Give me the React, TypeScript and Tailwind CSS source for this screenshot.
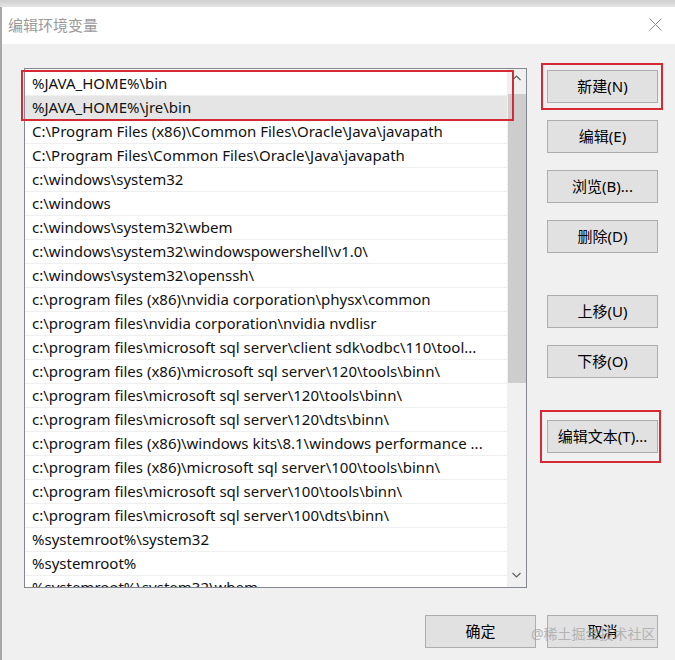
import React from 'react'

const rows = [
  '%JAVA_HOME%\\bin',
  '%JAVA_HOME%\\jre\\bin',
  'C:\\Program Files (x86)\\Common Files\\Oracle\\Java\\javapath',
  'C:\\Program Files\\Common Files\\Oracle\\Java\\javapath',
  'c:\\windows\\system32',
  'c:\\windows',
  'c:\\windows\\system32\\wbem',
  'c:\\windows\\system32\\windowspowershell\\v1.0\\',
  'c:\\windows\\system32\\openssh\\',
  'c:\\program files (x86)\\nvidia corporation\\physx\\common',
  'c:\\program files\\nvidia corporation\\nvidia nvdlisr',
  'c:\\program files\\microsoft sql server\\client sdk\\odbc\\110\\tool...',
  'c:\\program files (x86)\\microsoft sql server\\120\\tools\\binn\\',
  'c:\\program files\\microsoft sql server\\120\\tools\\binn\\',
  'c:\\program files\\microsoft sql server\\120\\dts\\binn\\',
  'c:\\program files (x86)\\windows kits\\8.1\\windows performance ...',
  'c:\\program files (x86)\\microsoft sql server\\100\\tools\\binn\\',
  'c:\\program files\\microsoft sql server\\100\\tools\\binn\\',
  'c:\\program files\\microsoft sql server\\100\\dts\\binn\\',
  '%systemroot%\\system32',
  '%systemroot%',
  '%systemroot%\\system32\\wbem',
]

const font = { fontFamily: '"Noto Sans", "Noto Sans CJK SC", sans-serif' }

function Btn({ label, className = '' }: { label: string; className?: string }) {
  return (
    <div
      className={`flex h-[33px] w-[111px] items-center justify-center border border-[#adadad] bg-[#e1e1e1] text-[15px] text-black ${className}`}
    >
      {label}
    </div>
  )
}

export default function App() {
  return (
    <div className="relative h-[660px] w-[675px] overflow-hidden bg-[#f0f0f0]" style={font}>
      <div className="h-[7px] bg-gradient-to-b from-[#cfcfcf] to-[#e4e4e4]" />
      <div className="flex h-[37px] items-center justify-between border-l-2 border-[#a8a8a8] bg-white pl-[6px] pr-[13px]">
        <span className="text-[15px] text-[#9a9a9a]">编辑环境变量</span>
        <svg width="13" height="13" viewBox="0 0 13 13" className="mb-[2px]">
          <path d="M0.5 0.5 L12.5 12.5 M12.5 0.5 L0.5 12.5" stroke="#8a8a8a" strokeWidth="1" fill="none" />
        </svg>
      </div>

      <div className="flex h-[616px] border-l-2 border-[#a8a8a8]">
        <div className="flex flex-col pl-[22px] pt-[24px]">
          <div className="relative flex h-[520px] w-[503px] border border-[#828790] bg-white">
            <div className="flex-1 overflow-hidden pt-[3px]">
              {rows.map((r, i) => (
                <div
                  key={i}
                  className={`flex h-[24px] items-center whitespace-nowrap border-b border-[#efefef] pl-[7px] text-[15px] text-[#111] ${
                    i === 1 ? 'bg-[#e5e5e5]' : ''
                  }`}
                >
                  {r}
                </div>
              ))}
            </div>
            <div className="flex w-[19px] flex-col items-center bg-[#f0f0f0]">
              <div className="flex h-[17px] items-center justify-center">
                <svg width="9" height="6" viewBox="0 0 9 6">
                  <path d="M0.5 5 L4.5 1 L8.5 5" stroke="#606060" strokeWidth="1.2" fill="none" />
                </svg>
              </div>
              <div className="mt-[8px] h-[289px] w-[18px] bg-[#cdcdcd]" />
              <div className="flex-1" />
              <div className="flex h-[24px] items-center justify-center">
                <svg width="9" height="6" viewBox="0 0 9 6">
                  <path d="M0.5 1 L4.5 5 L8.5 1" stroke="#606060" strokeWidth="1.2" fill="none" />
                </svg>
              </div>
            </div>
            <div className="pointer-events-none absolute left-[-4px] top-[1px] h-[51px] w-[493px] border-2 border-[#d42a33]" />
          </div>
        </div>

        <div className="flex flex-col pl-[20px] pt-[26px]">
          <div className="relative">
            <Btn label="新建(N)" />
            <div className="pointer-events-none absolute left-[-6px] top-[-7px] h-[47px] w-[122px] border-2 border-[#d42a33]" />
          </div>
          <Btn label="编辑(E)" className="mt-[17px]" />
          <Btn label="浏览(B)..." className="mt-[17px]" />
          <Btn label="删除(D)" className="mt-[17px]" />
          <Btn label="上移(U)" className="mt-[42px]" />
          <Btn label="下移(O)" className="mt-[17px]" />
          <div className="relative mt-[42px]">
            <Btn label="编辑文本(T)..." />
            <div className="pointer-events-none absolute left-[-7px] top-[-10px] h-[53px] w-[121px] border-2 border-[#d42a33]" />
          </div>
        </div>
      </div>

      <div className="absolute left-[425px] top-[615px] flex gap-[11px]">
        <Btn label="确定" />
        <Btn label="取消" />
      </div>
      <div className="pointer-events-none absolute left-[531px] top-[623px] text-[14px] text-[#a0a0a0] opacity-70">
        @稀土掘金技术社区
      </div>
    </div>
  )
}
